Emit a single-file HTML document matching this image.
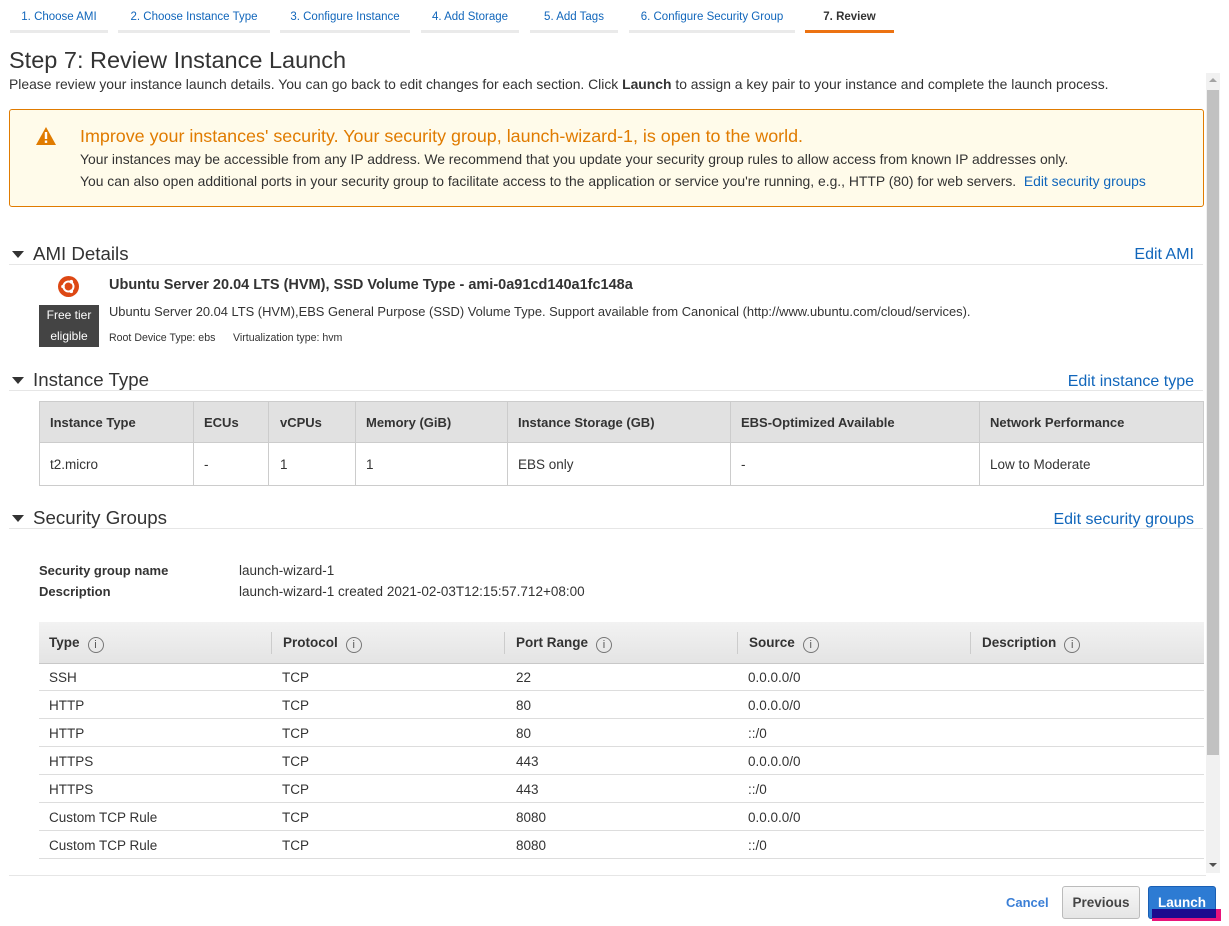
<!DOCTYPE html>
<html><head><meta charset="utf-8"><style>
*{margin:0;padding:0;box-sizing:border-box}
body{width:1229px;height:926px;position:relative;background:#fff;font-family:"Liberation Sans",sans-serif;color:#333;overflow:hidden}
.t{position:absolute;white-space:nowrap;line-height:1.2}
.a{color:#1166bb}
.tab{position:absolute;top:5px;height:28px;border-bottom:3px solid #eaeaea;font-size:11.5px;color:#1166bb;padding-top:6px;text-align:center}
.hl{position:absolute;left:9px;width:1194px;height:1px;background:#e6e6e6}
.tri{position:absolute;width:0;height:0;border-left:6px solid transparent;border-right:6px solid transparent;border-top:7px solid #333}
.h{font-size:18.7px;color:#333}
.b{font-weight:bold}
.vl{position:absolute;width:1px;background:#ccc}
.info{display:inline-block;width:16px;height:16px;border:1px solid #777;border-radius:50%;font-size:11px;text-align:center;line-height:14px;font-weight:normal;color:#555;margin-left:8px;vertical-align:-1px}
</style></head><body>
<div class="tab" style="left:10px;width:98px">1. Choose AMI</div>
<div class="tab" style="left:118px;width:152px">2. Choose Instance Type</div>
<div class="tab" style="left:280px;width:130px">3. Configure Instance</div>
<div class="tab" style="left:421px;width:98px">4. Add Storage</div>
<div class="tab" style="left:530px;width:88px">5. Add Tags</div>
<div class="tab" style="left:629px;width:166px">6. Configure Security Group</div>
<div class="tab" style="left:805px;width:89px;color:#333;font-weight:bold;border-bottom-color:#ec7211">7. Review</div>

<div class="t" style="left:9px;top:46px;font-size:23.5px">Step 7: Review Instance Launch</div>
<div class="t" style="left:9px;top:76px;font-size:13.9px">Please review your instance launch details. You can go back to edit changes for each section. Click <b>Launch</b> to assign a key pair to your instance and complete the launch process.</div>

<div style="position:absolute;left:1206px;top:73px;width:14px;height:800px;background:#f1f1f1"></div>
<div style="position:absolute;left:1207px;top:90px;width:12px;height:665px;background:#c1c1c1"></div>
<div class="tri" style="left:1209px;top:78px;border-top:none;border-bottom:4px solid #a3a3a3;border-left-width:4px;border-right-width:4px"></div>
<div class="tri" style="left:1209px;top:863px;border-top:4px solid #505050;border-left-width:4px;border-right-width:4px"></div>

<div style="position:absolute;left:9px;top:109px;width:1195px;height:98px;background:#fffbea;border:1px solid #e07b00;border-radius:3px"></div>
<svg style="position:absolute;left:36px;top:127px" width="20" height="18" viewBox="0 0 20 18"><path d="M10 0 L20 18 L0 18 Z" fill="#e07b00"/><rect x="8.8" y="5" width="2.4" height="7" fill="#fff"/><rect x="8.8" y="13.5" width="2.4" height="2.4" fill="#fff"/></svg>
<div class="t" style="left:80px;top:126px;font-size:17.9px;color:#e07b00">Improve your instances' security. Your security group, launch-wizard-1, is open to the world.</div>
<div class="t" style="left:80px;top:151px;font-size:13.9px">Your instances may be accessible from any IP address. We recommend that you update your security group rules to allow access from known IP addresses only.</div>
<div class="t" style="left:80px;top:173px;font-size:13.9px">You can also open additional ports in your security group to facilitate access to the application or service you're running, e.g., HTTP (80) for web servers. &nbsp;<span class="a">Edit security groups</span></div>

<div class="tri" style="left:12px;top:251px"></div>
<div class="t h" style="left:33px;top:243px">AMI Details</div>
<div class="t a" style="right:35px;top:245px;font-size:16px">Edit AMI</div>
<div class="hl" style="top:264px"></div>
<svg style="position:absolute;left:58px;top:276px" width="21" height="21" viewBox="0 0 21 21"><circle cx="10.5" cy="10.5" r="10.5" fill="#dd4814"/><circle cx="10.5" cy="10.5" r="5" fill="none" stroke="#fff" stroke-width="2"/><circle cx="5" cy="10.5" r="1.8" fill="#fff"/><circle cx="13.3" cy="5.7" r="1.8" fill="#fff"/><circle cx="13.3" cy="15.3" r="1.8" fill="#fff"/></svg>
<div style="position:absolute;left:39px;top:305px;width:60px;height:42px;background:#444;color:#fff;font-size:12px;text-align:center;line-height:21px">Free tier<br>eligible</div>
<div class="t b" style="left:109px;top:277px;font-size:14.5px">Ubuntu Server 20.04 LTS (HVM), SSD Volume Type - ami-0a91cd140a1fc148a</div>
<div class="t" style="left:109px;top:304px;font-size:12.9px">Ubuntu Server 20.04 LTS (HVM),EBS General Purpose (SSD) Volume Type. Support available from Canonical (http://www.ubuntu.com/cloud/services).</div>
<div class="t" style="left:109px;top:332px;font-size:10.6px">Root Device Type: ebs &nbsp;&nbsp;&nbsp;&nbsp; Virtualization type: hvm</div>

<div class="tri" style="left:12px;top:377px"></div>
<div class="t h" style="left:33px;top:369px">Instance Type</div>
<div class="t a" style="right:35px;top:372px;font-size:16px">Edit instance type</div>
<div class="hl" style="top:390px"></div>
<div style="position:absolute;left:39px;top:401px;width:1165px;height:85px;border:1px solid #ccc"></div>
<div style="position:absolute;left:40px;top:402px;width:1163px;height:41px;background:#e1e1e1;border-bottom:1px solid #ccc"></div>
<div class="vl" style="left:193px;top:401px;height:85px"></div>
<div class="vl" style="left:268px;top:401px;height:85px"></div>
<div class="vl" style="left:355px;top:401px;height:85px"></div>
<div class="vl" style="left:507px;top:401px;height:85px"></div>
<div class="vl" style="left:730px;top:401px;height:85px"></div>
<div class="vl" style="left:979px;top:401px;height:85px"></div>
<div class="t b" style="left:50px;top:415px;font-size:13px">Instance Type</div>
<div class="t b" style="left:204px;top:415px;font-size:13px">ECUs</div>
<div class="t b" style="left:280px;top:415px;font-size:13px">vCPUs</div>
<div class="t b" style="left:366px;top:415px;font-size:13px">Memory (GiB)</div>
<div class="t b" style="left:518px;top:415px;font-size:13px">Instance Storage (GB)</div>
<div class="t b" style="left:741px;top:415px;font-size:13px">EBS-Optimized Available</div>
<div class="t b" style="left:990px;top:415px;font-size:13px">Network Performance</div>
<div class="t" style="left:50px;top:457px;font-size:13.5px">t2.micro</div>
<div class="t" style="left:204px;top:457px;font-size:13.5px">-</div>
<div class="t" style="left:280px;top:457px;font-size:13.5px">1</div>
<div class="t" style="left:366px;top:457px;font-size:13.5px">1</div>
<div class="t" style="left:518px;top:457px;font-size:13.5px">EBS only</div>
<div class="t" style="left:741px;top:457px;font-size:13.5px">-</div>
<div class="t" style="left:990px;top:457px;font-size:13.5px">Low to Moderate</div>

<div class="tri" style="left:12px;top:515px"></div>
<div class="t h" style="left:33px;top:507px">Security Groups</div>
<div class="t a" style="right:35px;top:510px;font-size:16px">Edit security groups</div>
<div class="hl" style="top:528px"></div>
<div class="t b" style="left:39px;top:563px;font-size:13px">Security group name</div>
<div class="t b" style="left:39px;top:584px;font-size:13px">Description</div>
<div class="t" style="left:239px;top:563px;font-size:13.5px">launch-wizard-1</div>
<div class="t" style="left:239px;top:584px;font-size:13.5px">launch-wizard-1 created 2021-02-03T12:15:57.712+08:00</div>

<div style="position:absolute;left:39px;top:622px;width:1165px;height:42px;background:linear-gradient(#f2f2f2,#e4e4e4);border-bottom:1px solid #c8c8c8"></div>
<div class="vl" style="left:271px;top:632px;height:22px"></div>
<div class="vl" style="left:504px;top:632px;height:22px"></div>
<div class="vl" style="left:737px;top:632px;height:22px"></div>
<div class="vl" style="left:970px;top:632px;height:22px"></div>
<div class="t b" style="left:49px;top:635px;font-size:13.5px">Type<span class="info">i</span></div>
<div class="t b" style="left:283px;top:635px;font-size:13.5px">Protocol<span class="info">i</span></div>
<div class="t b" style="left:516px;top:635px;font-size:13.5px">Port Range<span class="info">i</span></div>
<div class="t b" style="left:749px;top:635px;font-size:13.5px">Source<span class="info">i</span></div>
<div class="t b" style="left:982px;top:635px;font-size:13.5px">Description<span class="info">i</span></div>

<div style="position:absolute;left:39px;top:663px;width:1165px;font-size:13.5px">
<div style="height:28px;border-bottom:1px solid #ddd;position:relative"><span class="t" style="left:10px;top:7px">SSH</span><span class="t" style="left:243px;top:7px">TCP</span><span class="t" style="left:477px;top:7px">22</span><span class="t" style="left:709px;top:7px">0.0.0.0/0</span></div>
<div style="height:28px;border-bottom:1px solid #ddd;position:relative"><span class="t" style="left:10px;top:7px">HTTP</span><span class="t" style="left:243px;top:7px">TCP</span><span class="t" style="left:477px;top:7px">80</span><span class="t" style="left:709px;top:7px">0.0.0.0/0</span></div>
<div style="height:28px;border-bottom:1px solid #ddd;position:relative"><span class="t" style="left:10px;top:7px">HTTP</span><span class="t" style="left:243px;top:7px">TCP</span><span class="t" style="left:477px;top:7px">80</span><span class="t" style="left:709px;top:7px">::/0</span></div>
<div style="height:28px;border-bottom:1px solid #ddd;position:relative"><span class="t" style="left:10px;top:7px">HTTPS</span><span class="t" style="left:243px;top:7px">TCP</span><span class="t" style="left:477px;top:7px">443</span><span class="t" style="left:709px;top:7px">0.0.0.0/0</span></div>
<div style="height:28px;border-bottom:1px solid #ddd;position:relative"><span class="t" style="left:10px;top:7px">HTTPS</span><span class="t" style="left:243px;top:7px">TCP</span><span class="t" style="left:477px;top:7px">443</span><span class="t" style="left:709px;top:7px">::/0</span></div>
<div style="height:28px;border-bottom:1px solid #ddd;position:relative"><span class="t" style="left:10px;top:7px">Custom TCP Rule</span><span class="t" style="left:243px;top:7px">TCP</span><span class="t" style="left:477px;top:7px">8080</span><span class="t" style="left:709px;top:7px">0.0.0.0/0</span></div>
<div style="height:28px;border-bottom:1px solid #ddd;position:relative"><span class="t" style="left:10px;top:7px">Custom TCP Rule</span><span class="t" style="left:243px;top:7px">TCP</span><span class="t" style="left:477px;top:7px">8080</span><span class="t" style="left:709px;top:7px">::/0</span></div>
</div>

<div class="hl" style="top:875px;width:1197px"></div>
<div class="t b a" style="left:1006px;top:895px;font-size:13px;color:#3b7fd6">Cancel</div>
<div style="position:absolute;left:1062px;top:886px;width:78px;height:33px;border:1px solid #bbb;border-radius:3px;background:linear-gradient(#f7f7f7,#e5e5e5);font-size:13.5px;font-weight:bold;text-align:center;line-height:31px;color:#444">Previous</div>
<div style="position:absolute;left:1148px;top:886px;width:68px;height:33px;border:1px solid #1a5fb4;border-radius:3px;background:#2d7bd3;font-size:13.5px;font-weight:bold;text-align:center;line-height:31px;color:#fff">Launch</div>
<div style="position:absolute;left:1152px;top:909px;width:64px;height:10px;background:#1c0b8e"></div>
<div style="position:absolute;left:1152px;top:918px;width:69px;height:3px;background:#e8137a"></div>
<div style="position:absolute;left:1216px;top:909px;width:5px;height:12px;background:#e8137a"></div>
</body></html>
